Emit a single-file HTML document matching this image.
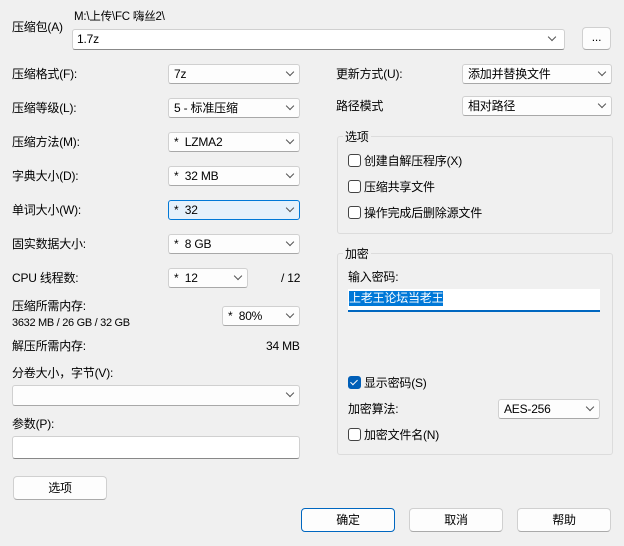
<!DOCTYPE html>
<html><head><meta charset="utf-8"><style>
body{margin:0;width:624px;height:546px;background:#f0f0f0;font-family:"Liberation Sans","Noto Sans CJK SC",sans-serif;font-size:12px;color:#000;position:relative;overflow:hidden;letter-spacing:-0.2px}
.a{position:absolute;white-space:nowrap;line-height:14px}
.cb{position:absolute;height:20px;box-sizing:border-box;background:#fdfdfd;border:1px solid #d0d0d0;border-bottom-color:#a8a8a8;border-radius:3px;padding-left:5px;line-height:18px}
.cb::after{content:"";position:absolute;right:6px;top:4px;width:5px;height:5px;border-right:1px solid #555;border-bottom:1px solid #555;transform:rotate(45deg)}
.in{position:absolute;box-sizing:border-box;background:#fff;border:1px solid #d0d0d0;border-bottom-color:#888;border-radius:3px}
.gb{position:absolute;border:1px solid #dcdcdc;border-radius:3px}
.gt{position:absolute;background:#f0f0f0;padding:0 2px;line-height:14px}
.ck{position:absolute;width:11px;height:11px;border:1px solid #444;border-radius:3px;background:#fff}
.bt{position:absolute;box-sizing:border-box;height:24px;background:#fdfdfd;border:1px solid #d0d0d0;border-bottom-color:#aaa;border-radius:4px;text-align:center;line-height:22px}
.s{font-size:11.5px}
</style></head><body>
<div class="a" style="left:12px;top:20px">压缩包(A)</div>
<div class="a s" style="left:74px;top:10px">M:\上传\FC 嗨丝2\</div>
<div class="in" style="left:72px;top:29px;width:493px;height:21px;padding-left:4px;line-height:19px">1.7z</div>
<div style="position:absolute;left:549px;top:34px;width:5px;height:5px;border-right:1px solid #555;border-bottom:1px solid #555;transform:rotate(45deg)"></div>
<div class="bt" style="left:582px;top:27px;width:29px;height:23px;line-height:18px">...</div>

<div class="a" style="left:12px;top:67px">压缩格式(F):</div>
<div class="cb" style="left:168px;top:64px;width:132px">7z</div>
<div class="a" style="left:12px;top:101px">压缩等级(L):</div>
<div class="cb" style="left:168px;top:98px;width:132px">5 - 标准压缩</div>
<div class="a" style="left:12px;top:135px">压缩方法(M):</div>
<div class="cb" style="left:168px;top:132px;width:132px">*&nbsp; LZMA2</div>
<div class="a" style="left:12px;top:169px">字典大小(D):</div>
<div class="cb" style="left:168px;top:166px;width:132px">*&nbsp; 32 MB</div>
<div class="a" style="left:12px;top:203px">单词大小(W):</div>
<div class="cb" style="left:168px;top:200px;width:132px;background:#e5f1fb;border-color:#0078d7">*&nbsp; 32</div>
<div class="a" style="left:12px;top:237px">固实数据大小:</div>
<div class="cb" style="left:168px;top:234px;width:132px">*&nbsp; 8 GB</div>
<div class="a" style="left:12px;top:271px">CPU 线程数:</div>
<div class="cb" style="left:168px;top:268px;width:80px">*&nbsp; 12</div>
<div class="a" style="left:281px;top:271px">/ 12</div>
<div class="a" style="left:12px;top:299px">压缩所需内存:</div>
<div class="a" style="left:12px;top:316px;font-size:11px;letter-spacing:-0.3px">3632 MB / 26 GB / 32 GB</div>
<div class="cb" style="left:222px;top:306px;width:78px">*&nbsp; 80%</div>
<div class="a" style="left:12px;top:339px">解压所需内存:</div>
<div class="a" style="left:266px;top:339px">34 MB</div>
<div class="a" style="left:12px;top:366px">分卷大小，字节(V):</div>
<div class="cb" style="left:12px;top:385px;width:288px;height:21px"></div>
<div class="a" style="left:12px;top:417px">参数(P):</div>
<div class="in" style="left:12px;top:436px;width:288px;height:23px"></div>
<div class="bt" style="left:13px;top:476px;width:94px">选项</div>

<div class="a" style="left:336px;top:67px">更新方式(U):</div>
<div class="cb" style="left:462px;top:64px;width:150px">添加并替换文件</div>
<div class="a" style="left:336px;top:99px">路径模式</div>
<div class="cb" style="left:462px;top:96px;width:150px">相对路径</div>

<div class="gb" style="left:337px;top:136px;width:274px;height:96px"></div>
<div class="gt" style="left:343px;top:130px">选项</div>
<div class="ck" style="left:348px;top:154px"></div><div class="a" style="left:364px;top:154px">创建自解压程序(X)</div>
<div class="ck" style="left:348px;top:180px"></div><div class="a" style="left:364px;top:180px">压缩共享文件</div>
<div class="ck" style="left:348px;top:206px"></div><div class="a" style="left:364px;top:206px">操作完成后删除源文件</div>

<div class="gb" style="left:337px;top:253px;width:274px;height:200px"></div>
<div class="gt" style="left:343px;top:247px">加密</div>
<div class="a" style="left:348px;top:270px">输入密码:</div>
<div style="position:absolute;left:348px;top:289px;width:252px;height:21px;background:#fff;border-bottom:2px solid #0067c0"></div>
<div class="a" style="left:349px;top:291px;background:#0078d7;color:#fff;height:15px">上老王论坛当老王</div>
<div class="ck" style="left:348px;top:376px;background:#005fb8;border-color:#005fb8"></div>
<div style="position:absolute;left:352px;top:378px;width:3px;height:6px;border-right:1.5px solid #fff;border-bottom:1.5px solid #fff;transform:rotate(45deg)"></div>
<div class="a" style="left:364px;top:376px">显示密码(S)</div>
<div class="a" style="left:348px;top:402px">加密算法:</div>
<div class="cb" style="left:498px;top:399px;width:102px">AES-256</div>
<div class="ck" style="left:348px;top:428px"></div><div class="a" style="left:364px;top:428px">加密文件名(N)</div>

<div class="bt" style="left:301px;top:508px;width:94px;border:1px solid #0067c0">确定</div>
<div class="bt" style="left:409px;top:508px;width:94px">取消</div>
<div class="bt" style="left:517px;top:508px;width:94px">帮助</div>
</body></html>
